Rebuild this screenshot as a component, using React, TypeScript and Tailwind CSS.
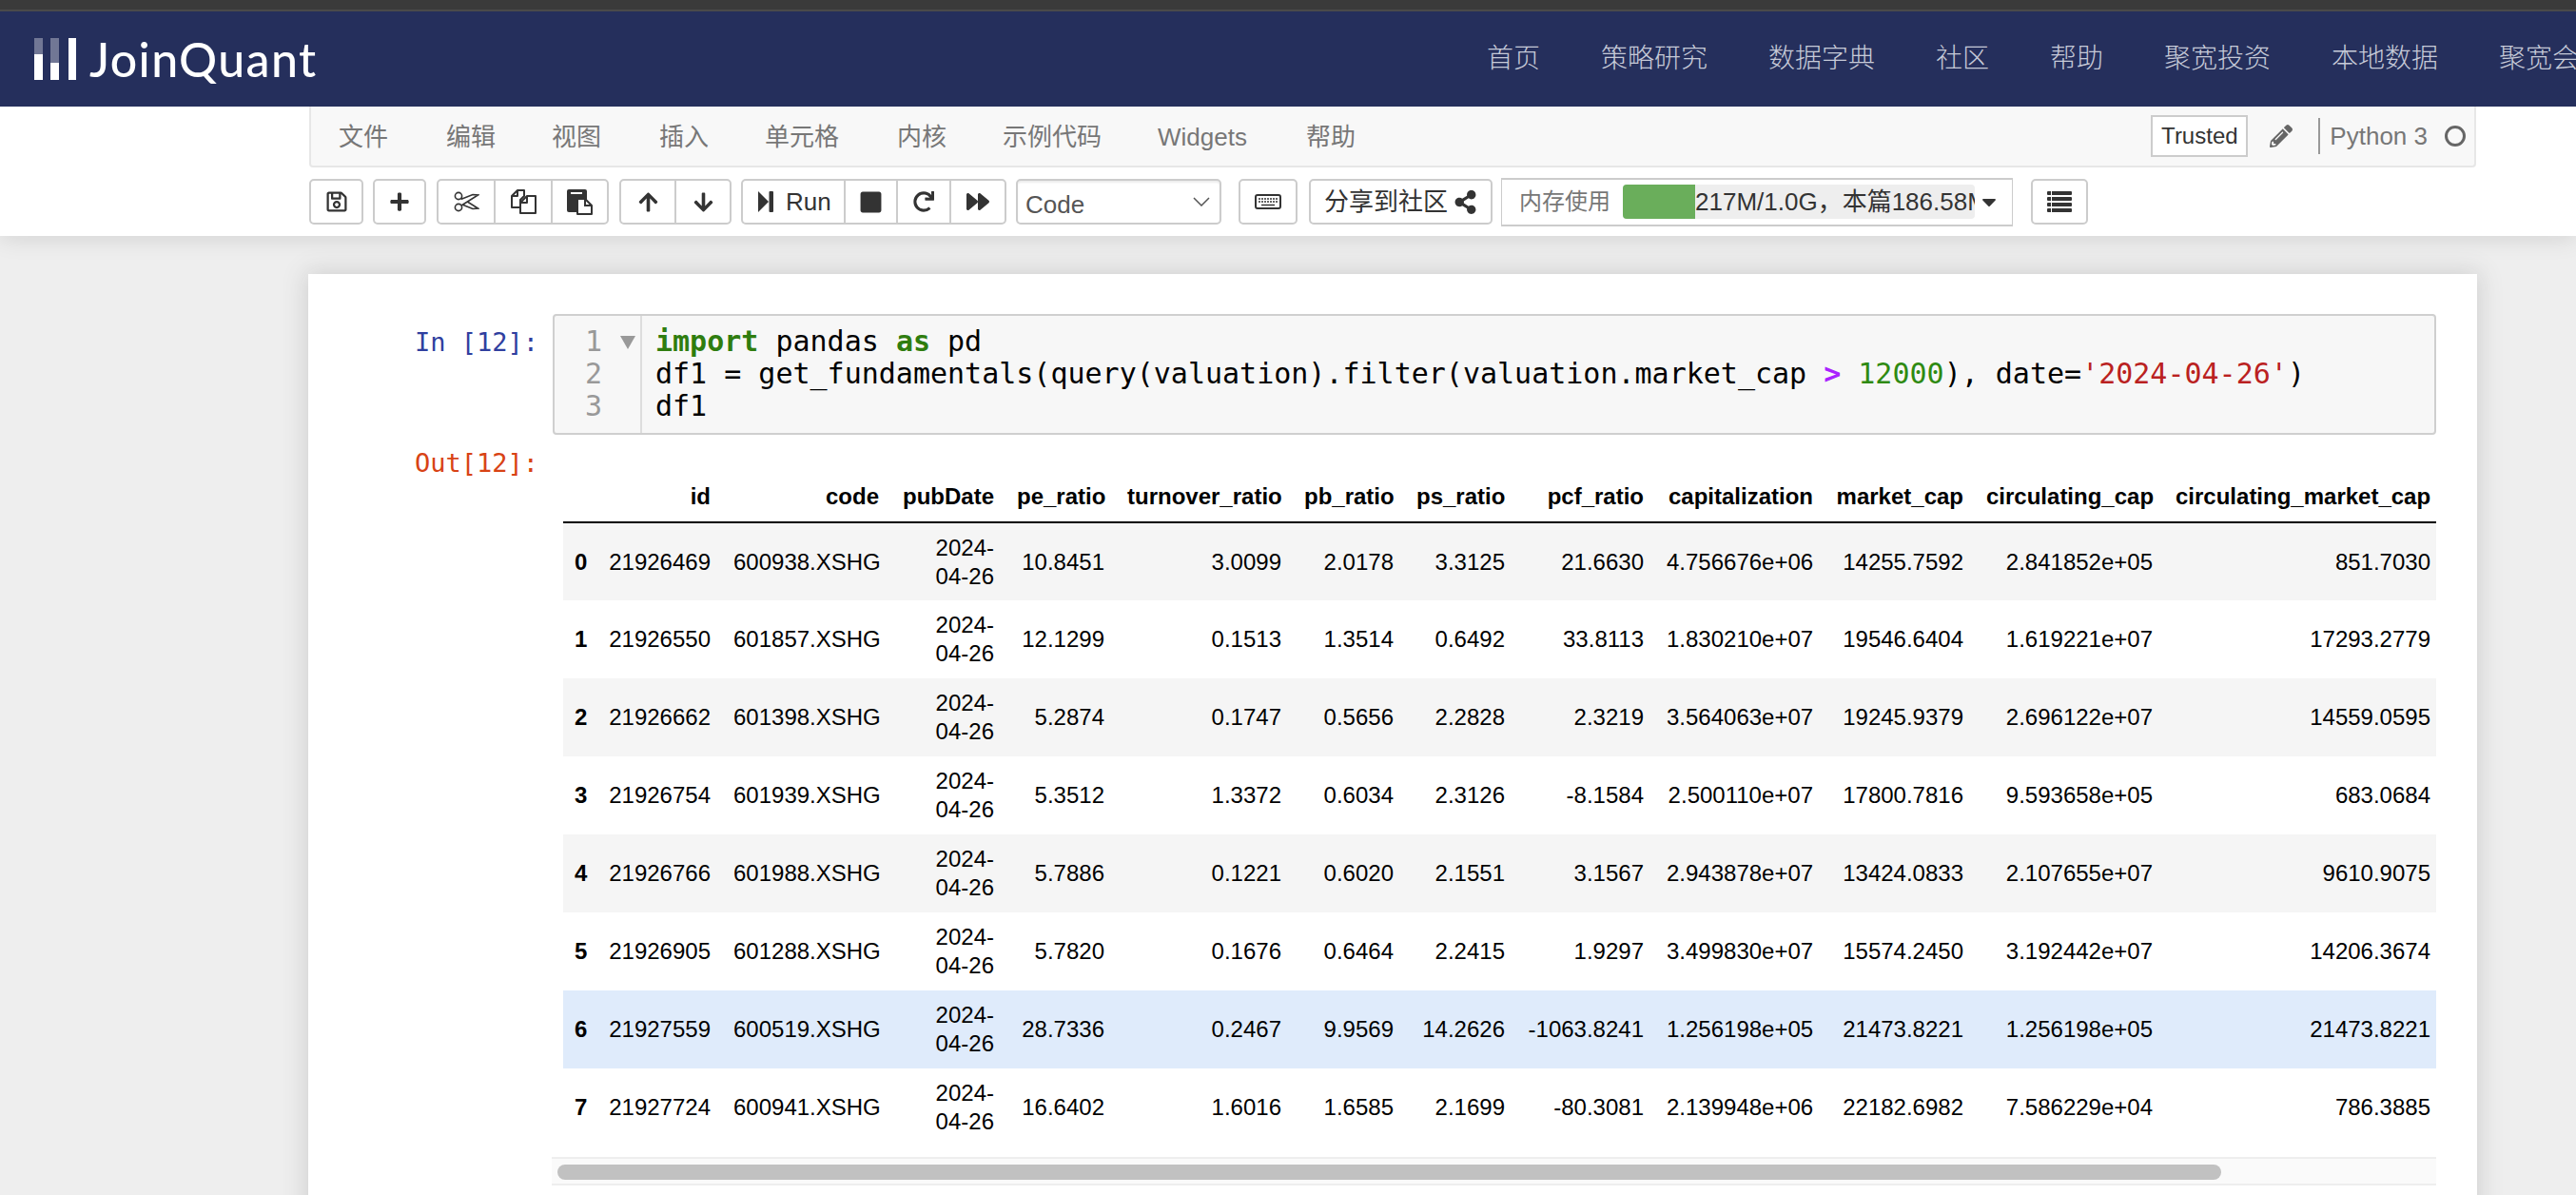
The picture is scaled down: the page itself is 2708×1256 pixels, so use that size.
import React from "react";
import {
  FaRegSave,
  FaPlus,
  FaArrowUp,
  FaArrowDown,
  FaStop,
  FaRedo,
  FaForward,
  FaShareAlt,
  FaPencilAlt,
  FaCaretDown,
} from "react-icons/fa";

const sans = "font-['Liberation_Sans','Noto_Sans_CJK_SC',sans-serif]";
const mono = "font-['DejaVu_Sans_Mono',monospace]";

const navItems = [
  { label: "首页", cls: "w-[56px]" },
  { label: "策略研究", cls: "w-[112px]" },
  { label: "数据字典", cls: "w-[112px]" },
  { label: "社区", cls: "w-[56px]" },
  { label: "帮助", cls: "w-[56px]" },
  { label: "聚宽投资", cls: "w-[112px]" },
  { label: "本地数据", cls: "w-[112px]" },
  { label: "聚宽会", cls: "w-[84px]" },
];

const menuItems = [
  { label: "文件", cls: "w-[113px]" },
  { label: "编辑", cls: "w-[111px]" },
  { label: "视图", cls: "w-[113px]" },
  { label: "插入", cls: "w-[111px]" },
  { label: "单元格", cls: "w-[139px]" },
  { label: "内核", cls: "w-[111px]" },
  { label: "示例代码", cls: "w-[163px]" },
  { label: "Widgets", cls: "w-[156px]" },
  { label: "帮助", cls: "w-[60px]" },
];

const columns = [
  { label: "", cls: "w-[36px]" },
  { label: "id", cls: "w-[131px]" },
  { label: "code", cls: "w-[177px]" },
  { label: "pubDate", cls: "w-[121px]" },
  { label: "pe_ratio", cls: "w-[116px]" },
  { label: "turnover_ratio", cls: "w-[186px]" },
  { label: "pb_ratio", cls: "w-[118px]" },
  { label: "ps_ratio", cls: "w-[117px]" },
  { label: "pcf_ratio", cls: "w-[146px]" },
  { label: "capitalization", cls: "w-[178px]" },
  { label: "market_cap", cls: "w-[158px]" },
  { label: "circulating_cap", cls: "w-[199px]" },
  { label: "circulating_market_cap", cls: "w-[292px]" },
];

const rows = [
  ["0", "21926469", "600938.XSHG", "2024-04-26", "10.8451", "3.0099", "2.0178", "3.3125", "21.6630", "4.756676e+06", "14255.7592", "2.841852e+05", "851.7030"],
  ["1", "21926550", "601857.XSHG", "2024-04-26", "12.1299", "0.1513", "1.3514", "0.6492", "33.8113", "1.830210e+07", "19546.6404", "1.619221e+07", "17293.2779"],
  ["2", "21926662", "601398.XSHG", "2024-04-26", "5.2874", "0.1747", "0.5656", "2.2828", "2.3219", "3.564063e+07", "19245.9379", "2.696122e+07", "14559.0595"],
  ["3", "21926754", "601939.XSHG", "2024-04-26", "5.3512", "1.3372", "0.6034", "2.3126", "-8.1584", "2.500110e+07", "17800.7816", "9.593658e+05", "683.0684"],
  ["4", "21926766", "601988.XSHG", "2024-04-26", "5.7886", "0.1221", "0.6020", "2.1551", "3.1567", "2.943878e+07", "13424.0833", "2.107655e+07", "9610.9075"],
  ["5", "21926905", "601288.XSHG", "2024-04-26", "5.7820", "0.1676", "0.6464", "2.2415", "1.9297", "3.499830e+07", "15574.2450", "3.192442e+07", "14206.3674"],
  ["6", "21927559", "600519.XSHG", "2024-04-26", "28.7336", "0.2467", "9.9569", "14.2626", "-1063.8241", "1.256198e+05", "21473.8221", "1.256198e+05", "21473.8221"],
  ["7", "21927724", "600941.XSHG", "2024-04-26", "16.6402", "1.6016", "1.6585", "2.1699", "-80.3081", "2.139948e+06", "22182.6982", "7.586229e+04", "786.3885"],
];

const rowBg = ["bg-[#f5f5f5]", "bg-white", "bg-[#f5f5f5]", "bg-white", "bg-[#f5f5f5]", "bg-white", "bg-[#dfebfb]", "bg-white"];

const ScissorsIcon = () => (
  <svg width="27" height="22" viewBox="0 0 27 22" fill="none" stroke="#333" strokeWidth="1.6">
    <circle cx="5" cy="5" r="3.6" />
    <circle cx="5" cy="17" r="3.6" />
    <path d="M8 7 L25.5 18 L20 18.5 L7.5 13.5" fill="#fff" />
    <path d="M8 15 L25.5 4 L20 3.5 L7.5 8.5" fill="#fff" />
  </svg>
);

const CopyIcon = () => (
  <svg width="27" height="26" viewBox="0 0 27 26" fill="none" stroke="#333" strokeWidth="2" strokeLinejoin="round">
    <path d="M7 1 H14 V7 L10 11 V19 H1 V7 Z" fill="#fff" />
    <path d="M7 1 V7 H1" />
    <path d="M17 7 H26 V25 H10 V14 Z" fill="#fff" />
    <path d="M17 7 V14 H10" />
  </svg>
);

const PasteIcon = () => (
  <svg width="27" height="27" viewBox="0 0 27 27">
    <rect x="0" y="0" width="21" height="24" rx="2" fill="#333" />
    <rect x="4" y="3" width="12" height="2" fill="#fff" />
    <path d="M11 10 H19 L26 17 V26 H11 Z" fill="#fff" stroke="#333" strokeWidth="2" strokeLinejoin="round" />
    <path d="M19 10 V17 H26" fill="none" stroke="#333" strokeWidth="2" />
  </svg>
);

const StepIcon = () => (
  <svg width="16" height="22" viewBox="0 0 16 22" fill="#333">
    <polygon points="0,0 11,11 0,22" />
    <rect x="11.5" y="0" width="4.5" height="22" rx="1" />
  </svg>
);

const KeyboardIcon = () => (
  <svg width="28" height="16" viewBox="0 0 28 16" fill="none" stroke="#333">
    <rect x="1" y="1" width="26" height="14" rx="2" strokeWidth="2" />
    <path d="M4 5 H24 M4 8 H24" strokeWidth="1.6" strokeDasharray="2 1" />
    <path d="M7 11.5 H21" strokeWidth="1.6" />
  </svg>
);

const ListIcon = () => (
  <svg width="26" height="22" viewBox="0 0 26 22" fill="#333">
    <rect x="0" y="0" width="26" height="4" rx="1" />
    <rect x="0" y="6" width="26" height="4" rx="1" />
    <rect x="0" y="12" width="26" height="4" rx="1" />
    <rect x="0" y="18" width="26" height="4" rx="1" />
    <path d="M4.5 0 V22" stroke="#fff" strokeWidth="1" />
  </svg>
);

const Logo = () => (
  <div className="w-[296px] shrink-0 flex items-center">
    <div className="flex h-[44px] w-[44px]">
      <div className="w-[9px] h-full flex flex-col">
        <div className="h-[17px] bg-white/35" />
        <div className="flex-1 bg-white" />
      </div>
      <div className="ml-[8px] w-[9px] h-full flex flex-col">
        <div className="h-[26px] bg-white/35" />
        <div className="flex-1 bg-white" />
      </div>
      <div className="ml-[10px] w-[8px] h-full bg-white" />
    </div>
    <span className="ml-[14px] font-['Lato',sans-serif] text-[50px] leading-none font-medium text-white tracking-[1.4px]">
      JoinQuant
    </span>
  </div>
);

const Btn = ({ children, cls = "w-[57px] justify-center" }: { children: React.ReactNode; cls?: string }) => (
  <div className={`h-full flex items-center text-[#333] ${cls}`}>{children}</div>
);

const Group = ({ children }: { children: React.ReactNode }) => (
  <div className="h-[48px] flex bg-white border-2 border-[#ccc] rounded-[5px] divide-x-2 divide-[#ccc] overflow-hidden">
    {children}
  </div>
);

const Toolbar = () => (
  <div className={`flex items-center h-[52px] mt-[10px] ${sans}`}>
    <Group><Btn cls="w-[53px] justify-center"><FaRegSave size={24} /></Btn></Group>
    <div className="ml-[10px]"><Group><Btn cls="w-[52px] justify-center"><FaPlus size={22} /></Btn></Group></div>
    <div className="ml-[11px]">
      <Group>
        <Btn cls="w-[60px] justify-center"><ScissorsIcon /></Btn>
        <Btn cls="w-[60px] justify-center"><CopyIcon /></Btn>
        <Btn cls="w-[57px] justify-center"><PasteIcon /></Btn>
      </Group>
    </div>
    <div className="ml-[11px]">
      <Group>
        <Btn cls="w-[58px] justify-center"><FaArrowUp size={23} /></Btn>
        <Btn cls="w-[56px] justify-center"><FaArrowDown size={23} /></Btn>
      </Group>
    </div>
    <div className="ml-[10px]">
      <Group>
        <Btn cls="w-[108px] justify-start pl-[16px] gap-[13px] text-[26px]"><StepIcon /><span>Run</span></Btn>
        <Btn cls="w-[55px] justify-center"><FaStop size={25} /></Btn>
        <Btn cls="w-[56px] justify-center"><FaRedo size={22} /></Btn>
        <Btn cls="w-[56px] justify-center"><FaForward size={24} /></Btn>
      </Group>
    </div>
    <div className="ml-[10px] w-[216px] h-[48px] flex items-center justify-between pl-[8px] pr-[10px] bg-white border-2 border-[#ccc] rounded-[5px] shadow-[inset_0_2px_2px_rgba(0,0,0,0.08)] text-[26px] text-[#555]">
      <span className="pt-[6px]">Code</span>
      <svg width="18" height="10" viewBox="0 0 18 10" fill="none" stroke="#555" strokeWidth="1.5">
        <polyline points="1,1 9,9 17,1" />
      </svg>
    </div>
    <div className="ml-[18px]"><Group><Btn cls="w-[58px] justify-center"><KeyboardIcon /></Btn></Group></div>
    <div className="ml-[12px]">
      <Group>
        <Btn cls="w-[189px] justify-center gap-[6px] text-[26px]"><span>分享到社区</span><FaShareAlt size={25} /></Btn>
      </Group>
    </div>
    <div className="ml-[9px] w-[538px] h-[51px] flex items-center bg-white border-y-2 border-x border-[#ccc] pl-[18px] text-[26px]">
      <span className="text-[#777] text-[24px] w-[109px] shrink-0">内存使用</span>
      <div className="w-[370px] h-[36px] flex bg-[#eee] rounded-[4px] overflow-hidden whitespace-nowrap text-[#333] leading-[36px]">
        <div className="w-[76px] shrink-0 bg-[#6aae5b]" />
        <span>217M/1.0G，本篇186.58M</span>
      </div>
      <FaCaretDown size={24} className="ml-[3px] text-[#333]" />
    </div>
    <div className="ml-[19px]"><Group><Btn cls="w-[56px] justify-center"><ListIcon /></Btn></Group></div>
  </div>
);

const InputCell = () => (
  <div className="flex">
    <div className={`w-[257px] shrink-0 pt-[13px] pr-[15px] text-right text-[27px] leading-[34px] text-[#303f9f] ${mono}`}>In [12]:</div>
    <div className={`w-[1980px] h-[127px] flex bg-[#f7f7f7] border-2 border-[#cfcfcf] rounded-[4px] text-[30px] leading-[34px] text-black whitespace-pre ${mono}`}>
      <div className="w-[92px] shrink-0 border-r-2 border-[#ddd] pt-[10px] text-[#999] flex">
        <div className="w-[50px] text-right">
          <div>1</div>
          <div>2</div>
          <div>3</div>
        </div>
        <svg className="ml-[18px] mt-[11px]" width="18" height="14" viewBox="0 0 18 14">
          <polygon points="1,0 17,0 9,14" fill="#999" />
        </svg>
      </div>
      <div className="pt-[10px] pl-[14px]">
        <div>
          <span className="text-[#2f7d0f] font-bold">import</span> pandas <span className="text-[#2f7d0f] font-bold">as</span> pd
        </div>
        <div>
          df1 = get_fundamentals(query(valuation).filter(valuation.market_cap <span className="text-[#aa22ff] font-bold">&gt;</span> <span className="text-[#2f8a12]">12000</span>), date=<span className="text-[#ba2121]">'2024-04-26'</span>)
        </div>
        <div>df1</div>
      </div>
    </div>
  </div>
);

const DataTable = () => (
  <table className={`table-fixed w-[1975px] border-collapse text-[24px] text-black ${sans}`}>
    <thead>
      <tr className="h-[50px] border-b-2 border-black">
        {columns.map((c) => (
          <th key={c.label} className={`${c.cls} px-[12px] pb-[3px] text-right font-bold align-middle whitespace-nowrap`}>{c.label}</th>
        ))}
      </tr>
    </thead>
    <tbody>
      {rows.map((r, i) => (
        <tr key={r[0]} className={`h-[82px] ${rowBg[i]}`}>
          {r.map((v, j) => (
            <td key={j} className={`px-[12px] text-right leading-[30px] align-middle ${j === 0 ? "font-bold" : ""}`}>
              {j === 3 ? (
                <>
                  2024-
                  <br />
                  04-26
                </>
              ) : (
                v
              )}
            </td>
          ))}
        </tr>
      ))}
    </tbody>
  </table>
);

const OutputCell = () => (
  <div className="flex mt-[10px]">
    <div className={`w-[256px] shrink-0 pt-[3px] pr-[14px] text-right text-[27px] leading-[34px] text-[#d84315] ${mono}`}>Out[12]:</div>
    <div className="w-[1981px] pt-[32px] overflow-hidden">
      <div className="pl-[12px] pb-[11px] overflow-hidden">
        <DataTable />
      </div>
      <div className="h-[30px] border-y-2 border-[#eee] bg-[#fafafa] py-[6px] pl-[6px]">
        <div className="w-[1749px] h-[16px] rounded-full bg-[#c1c1c1]" />
      </div>
    </div>
  </div>
);

export default function App() {
  return (
    <div className={`h-[1256px] overflow-hidden bg-[#eee] ${sans}`}>
      <header className="relative z-10 bg-white shadow-[0_2px_24px_rgba(0,0,0,0.12)] h-[248px]">
        <div className="h-[10px] bg-[#3a3a3a]" />
        <div className="h-[2px] bg-[#4a4a4a]" />
        <nav className="h-[100px] bg-[#252f5c] flex items-center pl-[36px] overflow-hidden whitespace-nowrap">
          <Logo />
          <div className="ml-[1231px] flex gap-[64px] font-light text-[28px] text-[#c6cad8] shrink-0">
            {navItems.map((n) => (
              <span key={n.label} className={n.cls}>{n.label}</span>
            ))}
          </div>
        </nav>
        <div className="ml-[325px] w-[2278px]">
          <div className="h-[64px] flex items-center justify-between bg-[#f8f8f8] border-x-2 border-b-2 border-[#e7e7e7] rounded-b-[4px] pl-[29px] text-[26px] text-[#777]">
            <div className="flex pt-[2px]">
              {menuItems.map((m) => (
                <span key={m.label + m.cls} className={m.cls}>{m.label}</span>
              ))}
            </div>
            <div className="flex items-center">
              <div className="w-[102px] h-[44px] flex items-center justify-center bg-white border-2 border-[#ccc] text-[#333] text-[24px]">Trusted</div>
              <FaPencilAlt size={24} className="ml-[23px] text-[#666]" />
              <div className="ml-[27px] w-[2px] h-[38px] bg-[#999]" />
              <span className="ml-[10px]">Python 3</span>
              <div className="ml-[18px] mr-[9px] w-[22px] h-[22px] rounded-full border-[3px] border-[#666]" />
            </div>
          </div>
          <Toolbar />
        </div>
      </header>
      <main className="ml-[324px] mt-[40px] w-[2280px] h-[1100px] bg-white shadow-[0_0_24px_2px_rgba(87,87,87,0.2)] pt-[42px]">
        <InputCell />
        <OutputCell />
      </main>
    </div>
  );
}
